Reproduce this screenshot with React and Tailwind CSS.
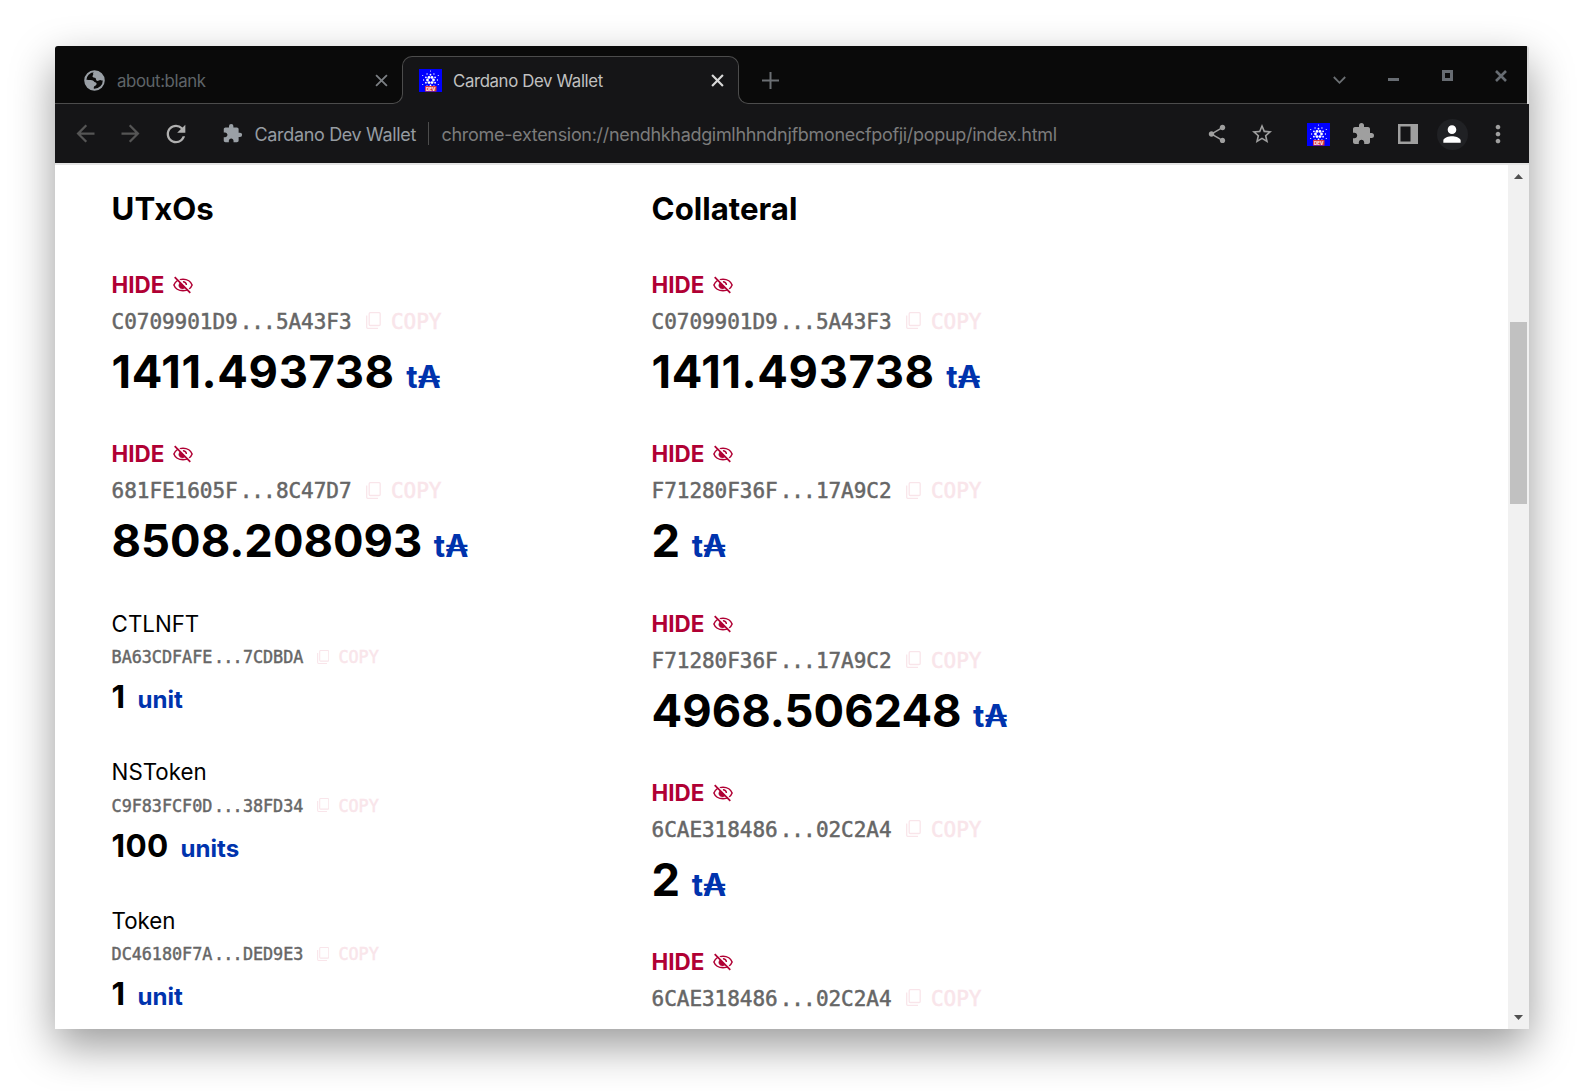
import { MdExtension, MdMoreVert, MdPerson, MdRefresh, MdShare, MdStarBorder, MdArrowBack, MdArrowForward } from 'react-icons/md';

const utxos = [
  { id: 'C0709901D9...5A43F3', amount: '1411.493738' },
  { id: '681FE1605F...8C47D7', amount: '8508.208093' },
];

const tokens = [
  { name: 'CTLNFT', id: 'BA63CDFAFE...7CDBDA', amount: '1', unit: 'unit' },
  { name: 'NSToken', id: 'C9F83FCF0D...38FD34', amount: '100', unit: 'units' },
  { name: 'Token', id: 'DC46180F7A...DED9E3', amount: '1', unit: 'unit' },
];

const collateral = [
  { id: 'C0709901D9...5A43F3', amount: '1411.493738' },
  { id: 'F71280F36F...17A9C2', amount: '2' },
  { id: 'F71280F36F...17A9C2', amount: '4968.506248' },
  { id: '6CAE318486...02C2A4', amount: '2' },
  { id: '6CAE318486...02C2A4', amount: '' },
];

function Cross({ size, stroke, className }) {
  return (
    <svg width={size} height={size} viewBox="0 0 12 12" className={className} fill="none" stroke="currentColor" strokeWidth={stroke}>
      <path d="M1 1 11 11M11 1 1 11" />
    </svg>
  );
}

function Globe() {
  return (
    <svg width="21" height="21" viewBox="0 0 21 21" className="ml-[2px] shrink-0 text-[#9aa0a6]">
      <circle cx="10.5" cy="10.5" r="9.3" fill="none" stroke="currentColor" strokeWidth="2" />
      <path d="M10.500 1.500C9.300 2.300 8.800 3.300 9.200 4.200c.3.800-.9 1.300-.7 2.400.3 1.300 2.200.8 3 1.500.8.800.2 2.200 1.400 2.700 1.300.5 2.200-1 3.400-.9 1 .1 1.800.8 3.400.7C19.500 5 16 1.500 10.500 1.500Z" fill="currentColor" />
      <path d="M1.500 9.500c1.700.6 4.500.2 6.700.8 1.700.5 1.700 1.700 3.100 2 1.300.4 1.700 1.500.9 2.600-.8 1-1.900.8-2.300 2-.3.900.1 1.800-.5 2.700C4.700 18.800 1.300 15 1.500 9.500Z" fill="currentColor" />
    </svg>
  );
}

function Favicon() {
  const dots = [];
  for (let i = 0; i < 6; i++) {
    const a = (i * Math.PI) / 3;
    const b = a + Math.PI / 6;
    dots.push([11.5 + 3 * Math.cos(a), 11 + 3 * Math.sin(a), 1.4]);
    dots.push([11.5 + 5.3 * Math.cos(b), 11 + 5.3 * Math.sin(b), 0.9]);
    dots.push([11.5 + 6.9 * Math.cos(a), 11 + 6.9 * Math.sin(a), 0.65]);
    dots.push([11.5 + 9 * Math.cos(b), 11 + 9 * Math.sin(b), 0.6]);
  }
  return (
    <svg width="23" height="23" viewBox="0 0 23 23" className="shrink-0">
      <rect width="23" height="23" fill="#0000ff" />
      {dots.map(([x, y, r], i) => <circle key={i} cx={x} cy={y} r={r} fill="#fff" />)}
      <rect x="6" y="17" width="11.5" height="5.500" fill="#d8363c" />
      <text x="11.75" y="21.500" textAnchor="middle" fontSize="4.6" fontWeight="700" fontFamily="Inter, sans-serif" fill="#fff">DEV</text>
    </svg>
  );
}

function EyeOff() {
  return (
    <svg width="20" height="20" viewBox="0 0 20 20" fill="none" stroke="currentColor" strokeWidth="1.5">
      <path d="M10 4.2C5.6 4.2 2 6.800 .9 10c1.100 3.200 4.700 5.800 9.100 5.800s8-2.600 9.100-5.800C18 6.800 14.400 4.200 10 4.200Z" />
      <path d="M9.900 6.700a3.400 3.400 0 0 1 3.500 3.300" />
      <path d="M7.300 7.600 12.200 12.500A3.500 3.500 0 1 1 7.300 7.600Z" fill="currentColor" strokeWidth=".6" />
      <path d="M3 1.700 18.400 17" stroke="#fff" strokeWidth="1.3" />
      <path d="M1.700 2.200 17.300 17.900" strokeWidth="1.700" />
    </svg>
  );
}

function CopyIcon({ className }) {
  return (
    <svg viewBox="0 0 15 17" className={className} fill="none" stroke="currentColor" strokeWidth="1.3">
      <rect x="3.200" y=".7" width="11" height="12.800" rx="1" />
      <path d="M.7 3.500V15.300a1 1 0 0 0 1 1H12" />
    </svg>
  );
}

function Hash({ id, small }) {
  const [head, tail] = id.split('...');
  return (
    <div className={small
      ? "flex h-[30.6px] items-center pt-[2px] font-['DejaVu_Sans_Mono',monospace] text-[16.8px] tracking-[-0.035px] [-webkit-text-stroke:0.45px_currentColor]"
      : "flex h-[37px] items-center pt-[2.6px] font-['DejaVu_Sans_Mono',monospace] text-[21px] tracking-[-0.043px] [-webkit-text-stroke:0.5px_currentColor]"}
    >
      <span className="text-[#666]">
        {head}
        <span className="mr-[0.062em] ml-[0.1em] tracking-[-0.048em]">...</span>
        {tail}
      </span>
      <span className="flex items-center text-[#f9e5ea]">
        <CopyIcon className={small ? 'mr-[9px] ml-[13.7px] h-[14px] w-[12.5px] -translate-y-px' : 'mr-[9.8px] ml-[14.7px] h-[17px] w-[15px] -translate-y-[2px]'} />
        COPY
      </span>
    </div>
  );
}

function Utxo({ id, amount }) {
  return (
    <div className="mb-[33.25px]">
      <div className="flex h-9 items-center text-[22.4px] font-bold text-[#b00034]">
        HIDE
        <span className="ml-[9px]"><EyeOff /></span>
      </div>
      <Hash id={id} />
      <div className="flex h-[63px] items-baseline text-[45.35px] leading-[63.2px] font-bold text-black">
        <span className={amount.startsWith('1411') ? 'tracking-[0.6px]' : ''}>{amount}</span>
        {amount && <span className="ml-[11.5px] text-[31px] text-[#0033ad]">t₳</span>}
      </div>
    </div>
  );
}

function Token({ name, id, amount, unit }) {
  return (
    <div className="mb-[32.6px]">
      <div className="h-9 text-[22.3px] leading-9 text-black">{name}</div>
      <Hash id={id} small />
      <div className="flex h-[49.4px] items-baseline text-[31.5px] leading-[49.2px] font-bold text-black">
        <span className="tracking-[0.3px]">{amount}</span>
        <span className="ml-[12px] text-[24.1px] text-[#0033ad]">{unit}</span>
      </div>
    </div>
  );
}

function TabStrip() {
  return (
    <div className="mr-[2px] flex h-[58px] shrink-0 items-end bg-[#0a0a0a] shadow-[inset_0_-1px_0_#4c4c4c]">
      <div className="flex h-[47px] w-[347px] items-center pl-[27px] text-[#5f6468]">
        <Globe />
        <span className="mt-[2px] ml-[12px] text-[16.8px] tracking-[-0.4px]">about:blank</span>
        <Cross size={13} stroke={1.7} className="mr-[14.5px] ml-auto text-[#7b7f83]" />
      </div>
      <div className="relative flex h-[48px] w-[337px] items-center rounded-t-[10px] border border-b-0 border-[#4c4c4c] bg-[#151517] pl-[16px]">
        <span className="absolute bottom-0 -left-[11px] h-[11px] w-[11px] bg-[#151517]">
          <span className="block h-full w-full rounded-br-[10px] border-r border-b border-[#4c4c4c] bg-[#0a0a0a]" />
        </span>
        <span className="absolute -right-[11px] bottom-0 h-[11px] w-[11px] bg-[#151517]">
          <span className="block h-full w-full rounded-bl-[10px] border-b border-l border-[#4c4c4c] bg-[#0a0a0a]" />
        </span>
        <Favicon />
        <span className="mt-[2px] ml-[11px] text-[16.8px] tracking-[-0.36px] text-[#c0c0c0]">Cardano Dev Wallet</span>
        <Cross size={13} stroke={2} className="mr-[14px] ml-auto text-[#d8d8d8]" />
      </div>
      <div className="flex h-[47px] grow items-center pl-[23px] text-[#6b6f73]">
        <svg width="17" height="17" viewBox="0 0 17 17" stroke="currentColor" strokeWidth="2"><path d="M8.500 0v17M0 8.500h17" /></svg>
        <svg width="13" height="9" viewBox="0 0 13 9" fill="none" stroke="currentColor" strokeWidth="1.800" className="ml-auto"><path d="M.8 1 6.500 6.800 12.200 1" /></svg>
        <span className="mb-[2px] ml-[42px] h-[3px] w-[11px] bg-[#676c72]" />
        <span className="mb-[10px] ml-[43px] h-[11px] w-[11px] border-[3px] border-[#676c72]" />
        <Cross size={12} stroke={2.6} className="mr-[20.5px] mb-[10px] ml-[41.5px] text-[#676c72]" />
      </div>
    </div>
  );
}

function Toolbar() {
  return (
    <div className="flex h-[59px] shrink-0 items-center bg-[#151517] text-[#9f9f9f]">
      <MdArrowBack size={27} className="ml-[17px] text-[#555]" />
      <MdArrowForward size={27} className="ml-[18px] text-[#555]" />
      <MdRefresh size={28} className="ml-[18px] text-[#b0b0b0]" />
      <MdExtension size={21} className="ml-[32px] text-[#9aa0a6]" />
      <span className="mt-[2px] ml-[11.500px] text-[18px] tracking-[-0.34px] text-[#969ca2]">Cardano Dev Wallet</span>
      <span className="ml-[12px] h-[23px] w-px bg-[#4c4c4c]" />
      <span className="mt-[2px] ml-[12.500px] text-[18px] tracking-[-0.315px] text-[#7c7c7c]">chrome-extension://nendhkhadgimlhhndnjfbmonecfpofji/popup/index.html</span>
      <div className="ml-auto flex items-center pt-px">
        <MdShare size={22} />
        <MdStarBorder size={24} className="ml-[22px]" />
        <span className="ml-[33px]"><Favicon /></span>
        <MdExtension size={24} className="ml-[21px]" />
        <svg width="20" height="20" viewBox="0 0 20 20" className="ml-[23px]">
          <rect width="20" height="20" fill="#9f9f9f" />
          <rect x="2.500" y="2.500" width="10" height="15" fill="#151517" />
        </svg>
        <span className="ml-[19px] flex h-[31px] w-[31px] items-center justify-center rounded-full bg-[#202124]">
          <MdPerson size={26} className="text-white" />
        </span>
        <MdMoreVert size={28} className="mr-[17.5px] ml-[16px]" />
      </div>
    </div>
  );
}

function Scrollbar() {
  return (
    <div className="flex w-[21px] shrink-0 flex-col items-center bg-[#f1f1f1] pt-[9px] pb-[9px]">
      <svg width="9" height="5" viewBox="0 0 9 5"><path d="M0 5 4.500 0 9 5Z" fill="#505050" /></svg>
      <div className="mt-[143px] h-[182px] w-[17px] bg-[#c1c1c1]" />
      <svg width="9" height="5" viewBox="0 0 9 5" className="mt-auto"><path d="M0 0 4.500 5 9 0Z" fill="#505050" /></svg>
    </div>
  );
}

export default function App() {
  return (
    <div className="h-[1091px] w-[1581px] overflow-hidden bg-white pt-[46px] pl-[55px] font-['Inter',sans-serif] whitespace-nowrap">
      <div className="flex h-[983px] w-[1474px] flex-col overflow-hidden rounded-t-[3px] bg-[#d9d9d9] shadow-[0_17px_44px_rgba(0,0,0,0.4)]">
        <TabStrip />
        <Toolbar />
        <div className="h-[2px] shrink-0 bg-[#e4e4e4]" />
        <div className="flex min-h-0 grow bg-white">
          <main className="grid min-w-0 grow grid-cols-[540px_1fr] content-start overflow-hidden pl-[56.6px]">
            <section>
              <h2 className="mt-[22px] mb-[35px] h-[45px] text-[31.2px] leading-[45px] font-bold text-black">UTxOs</h2>
              {utxos.map((u, i) => <Utxo key={i} {...u} />)}
              {tokens.map((t) => <Token key={t.name} {...t} />)}
            </section>
            <section>
              <h2 className="mt-[22px] mb-[35px] h-[45px] text-[31.2px] leading-[45px] font-bold text-black">Collateral</h2>
              {collateral.map((u, i) => <Utxo key={i} {...u} />)}
            </section>
          </main>
          <Scrollbar />
        </div>
      </div>
    </div>
  );
}
